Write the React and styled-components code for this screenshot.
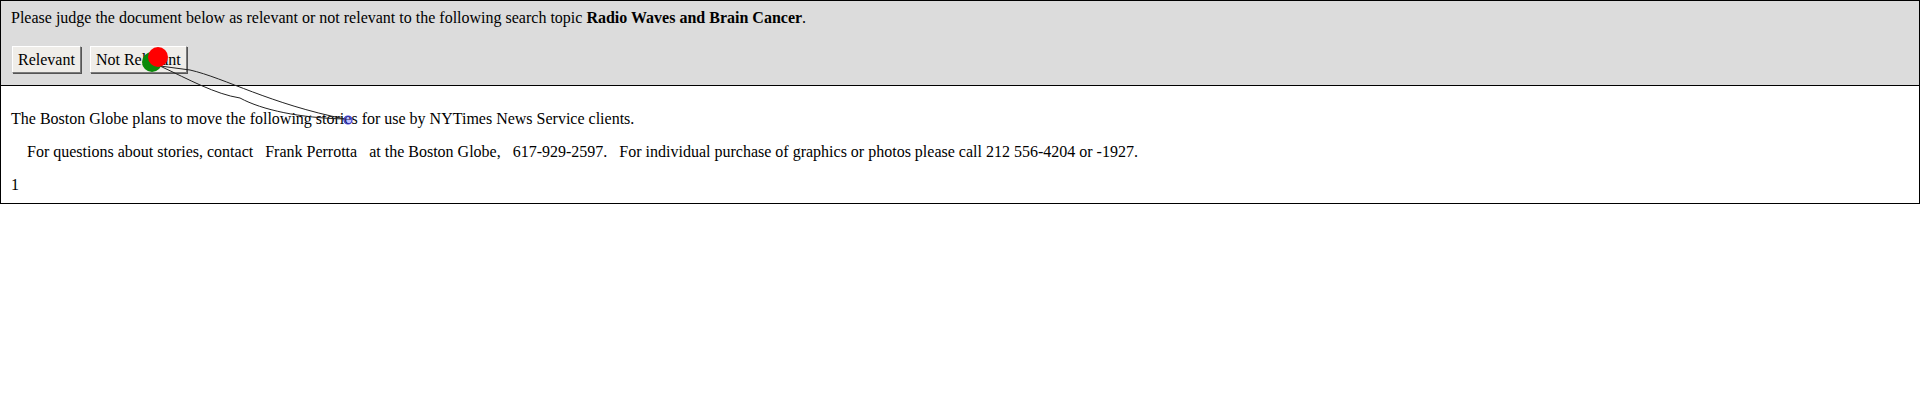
import React from "react";
import styled, { createGlobalStyle } from "styled-components";

const Global = createGlobalStyle`
  html, body { margin: 0; padding: 0; background: #fff; }
  body { font-family: "Liberation Serif", "Times New Roman", serif; font-size: 16px; color: #000; }
`;

const Page = styled.div`
  position: relative;
  width: 1920px;
  box-sizing: border-box;
`;

const Frame = styled.div`
  border: 1px solid #000;
  box-sizing: border-box;
  width: 1920px;
`;

const Header = styled.div`
  background: #dcdcdc;
  border-bottom: 1px solid #000;
  padding: 8px 10px 12px 10px;
  display: flex;
  flex-direction: column;
  gap: 19px;
`;

const Prompt = styled.div`
  line-height: 18px;
`;

const Buttons = styled.div`
  display: flex;
  gap: 9px;
  padding-left: 1px;
`;

const Button = styled.button`
  font-family: "Liberation Serif", "Times New Roman", serif;
  font-size: 16px;
  height: 27px;
  padding: 0 5px;
  background: #efede9;
  color: #000;
  border: 1px solid #7a7a7a;
  border-top-color: #fff;
  border-left-color: #fff;
  box-shadow: 1px 1px 0 #555;
  cursor: pointer;
`;

const Body = styled.div`
  background: #fff;
  padding: 24px 10px 9px 10px;
  display: flex;
  flex-direction: column;
  gap: 15px;
`;

const Para = styled.p`
  margin: 0;
  line-height: 18px;
  white-space: pre;
`;

const Overlay = styled.svg`
  position: absolute;
  left: 0;
  top: 0;
  pointer-events: none;
`;

export default function App() {
  return (
    <Page>
      <Global />
      <Frame>
        <Header>
          <Prompt>
            Please judge the document below as relevant or not relevant to the following search topic{" "}
            <b>Radio Waves and Brain Cancer</b>.
          </Prompt>
          <Buttons>
            <Button>Relevant</Button>
            <Button>Not Relevant</Button>
          </Buttons>
        </Header>
        <Body>
          <Para>The Boston Globe plans to move the following stories for use by NYTimes News Service clients.</Para>
          <Para>
            {"    For questions about stories, contact   Frank Perrotta   at the Boston Globe,   617-929-2597.   For individual purchase of graphics or photos please call 212 556-4204 or -1927."}
          </Para>
          <Para>1</Para>
        </Body>
      </Frame>
      <Overlay width="400" height="140" viewBox="0 0 400 140">
        <path d="M160 66 L190 70 C225 78 270 104 345 119" fill="none" stroke="#222" strokeWidth="1" />
        <path d="M160 66 C190 80 215 94 240 98 C262 110 300 118 345 119" fill="none" stroke="#222" strokeWidth="1" />
        <circle cx="152" cy="62" r="10" fill="#0a8a0a" />
        <circle cx="158" cy="57" r="10" fill="#ff0000" />
        <circle cx="348" cy="120" r="4" fill="rgba(80,80,255,0.35)" stroke="#3a3acc" strokeWidth="1.2" />
      </Overlay>
    </Page>
  );
}
